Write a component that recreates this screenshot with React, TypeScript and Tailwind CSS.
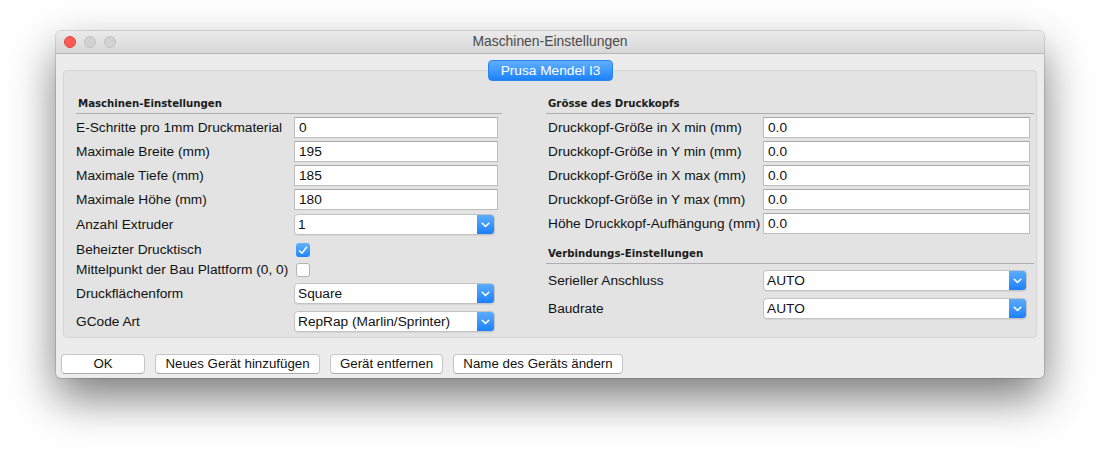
import React from "react";

const SANS = "font-['Liberation_Sans',Arial,sans-serif]";
const HEAD = "font-['DejaVu_Sans',Verdana,sans-serif]";

function Chevron() {
  return (
    <svg width="9" height="6" viewBox="0 0 9 6" fill="none">
      <path d="M1.2 1.2 L4.5 4.4 L7.8 1.2" stroke="white" strokeWidth="1.5" strokeLinecap="round" strokeLinejoin="round" />
    </svg>
  );
}

function TextBox({ value, w }: { value: string; w: string }) {
  return (
    <div
      className={`${w} h-[21px] bg-white border border-[#bdbdbd] border-t-[#a8a8a8] flex items-center pl-[4px] text-[13.7px] text-[#111] leading-none`}
    >
      {value}
    </div>
  );
}

function Select({ value, w }: { value: string; w: string }) {
  return (
    <div
      className={`${w} h-[21px] bg-white border border-[#c3c3c3] rounded-[4px] flex items-stretch shadow-[0_1px_0_rgba(0,0,0,0.06)] overflow-hidden`}
    >
      <div className="flex-1 flex items-center pl-[3px] text-[13.7px] text-[#111] leading-none">{value}</div>
      <div className="w-[17px] bg-gradient-to-b from-[#5aacfa] to-[#1a80fb] flex items-center justify-center">
        <Chevron />
      </div>
    </div>
  );
}

function Check({ on }: { on: boolean }) {
  return on ? (
    <div className="w-[14px] h-[14px] rounded-[3px] bg-gradient-to-b from-[#64b2fb] to-[#1d83fb] flex items-center justify-center">
      <svg width="10" height="9" viewBox="0 0 10 9" fill="none">
        <path d="M1.5 4.8 L3.9 7.3 L8.6 1.3" stroke="white" strokeWidth="1.5" strokeLinecap="round" strokeLinejoin="round" />
      </svg>
    </div>
  ) : (
    <div className="w-[14px] h-[14px] rounded-[3px] bg-white border border-[#b3b3b3]" />
  );
}

function Header({ text }: { text: string }) {
  return (
    <div className="h-[22px] border-b border-[#aeaeae] flex items-end pb-[4px] pl-[2px]">
      <span className={`${HEAD} font-bold text-[10.2px] leading-none text-[#1a1a1a]`}>{text}</span>
    </div>
  );
}

function Row({ label, children, lw, className = "" }: { label: string; children: React.ReactNode; lw: string; className?: string }) {
  return (
    <div className={`flex items-center ${className}`}>
      <div className={`${lw} text-[13.7px] text-[#111] leading-none whitespace-nowrap`}>{label}</div>
      {children}
    </div>
  );
}

function Btn({ label, w }: { label: string; w: string }) {
  return (
    <div
      className={`${w} h-[20px] bg-white border border-[#c6c6c6] border-b-[#acacac] rounded-[4px] flex items-center justify-center text-[13.3px] text-[#111] leading-none`}
    >
      {label}
    </div>
  );
}

export default function App() {
  return (
    <div className={`w-[1100px] h-[458px] bg-white pl-[56px] pt-[31px] ${SANS}`}>
      <div className="w-[988px] h-[347px] bg-[#ececec] rounded-[5px] shadow-[0_20px_45px_rgba(0,0,0,0.52),0_0_0_1px_rgba(0,0,0,0.13)] flex flex-col overflow-hidden">
        {/* title bar */}
        <div className="h-[23px] bg-gradient-to-b from-[#ebebeb] to-[#d7d7d7] border-b border-[#b6b6b6] flex items-center justify-center relative">
          <div className="absolute left-[8px] top-[5px] flex items-center gap-[8px]">
            <div className="w-[12px] h-[12px] rounded-full bg-[#fc5b57] border border-[#e2463f]" />
            <div className="w-[12px] h-[12px] rounded-full bg-[#d2d2d2] border border-[#c1c1c1]" />
            <div className="w-[12px] h-[12px] rounded-full bg-[#d2d2d2] border border-[#c1c1c1]" />
          </div>
          <div className="text-[13.9px] text-[#4a4a4a] leading-none">Maschinen-Einstellungen</div>
        </div>

        {/* content */}
        <div className="flex-1 flex flex-col px-[7px] pt-[6px]">
          <div className="flex justify-center relative z-10 pl-[1px]">
            <div className="w-[125px] h-[21px] rounded-[4px] bg-gradient-to-b from-[#5eaffa] to-[#1b80fb] border border-[#2a86ea] flex items-center justify-center text-white text-[13.7px] leading-none">
              Prusa Mendel I3
            </div>
          </div>
          <div className="-mt-[11px] h-[268px] bg-[#e3e3e3] border border-[#d4d4d4] rounded-[4px] flex pt-[21px] pl-[12px]">
            {/* left column */}
            <div className="w-[426px] flex flex-col">
              <Header text="Maschinen-Einstellungen" />
              <div className="flex flex-col gap-[3px] mt-[3px]">
                <Row label="E-Schritte pro 1mm Druckmaterial" lw="w-[218px]"><TextBox value="0" w="w-[204px]" /></Row>
                <Row label="Maximale Breite (mm)" lw="w-[218px]"><TextBox value="195" w="w-[204px]" /></Row>
                <Row label="Maximale Tiefe (mm)" lw="w-[218px]"><TextBox value="185" w="w-[204px]" /></Row>
                <Row label="Maximale Höhe (mm)" lw="w-[218px]"><TextBox value="180" w="w-[204px]" /></Row>
                <Row label="Anzahl Extruder" lw="w-[218px]" className="mt-[1px]"><Select value="1" w="w-[201px]" /></Row>
              </div>
              <div className="flex flex-col gap-[6px] mt-[8px]">
                <Row label="Beheizter Drucktisch" lw="w-[220px]"><Check on={true} /></Row>
                <Row label="Mittelpunkt der Bau Plattform (0, 0)" lw="w-[220px]"><Check on={false} /></Row>
              </div>
              <div className="flex flex-col gap-[7px] mt-[6px]">
                <Row label="Druckflächenform" lw="w-[218px]"><Select value="Square" w="w-[201px]" /></Row>
                <Row label="GCode Art" lw="w-[218px]"><Select value="RepRap (Marlin/Sprinter)" w="w-[201px]" /></Row>
              </div>
            </div>

            {/* right column */}
            <div className="w-[488px] ml-[44px] flex flex-col">
              <Header text="Grösse des Druckkopfs" />
              <div className="flex flex-col gap-[3px] mt-[3px]">
                <Row label="Druckkopf-Größe in X min (mm)" lw="w-[217px] pl-[2px]"><TextBox value="0.0" w="w-[267px]" /></Row>
                <Row label="Druckkopf-Größe in Y min (mm)" lw="w-[217px] pl-[2px]"><TextBox value="0.0" w="w-[267px]" /></Row>
                <Row label="Druckkopf-Größe in X max (mm)" lw="w-[217px] pl-[2px]"><TextBox value="0.0" w="w-[267px]" /></Row>
                <Row label="Druckkopf-Größe in Y max (mm)" lw="w-[217px] pl-[2px]"><TextBox value="0.0" w="w-[267px]" /></Row>
                <Row label="Höhe Druckkopf-Aufhängung (mm)" lw="w-[217px] pl-[2px]"><TextBox value="0.0" w="w-[267px]" /></Row>
              </div>
              <div className="mt-[8px]">
                <Header text="Verbindungs-Einstellungen" />
              </div>
              <div className="flex flex-col gap-[7px] mt-[6px]">
                <Row label="Serieller Anschluss" lw="w-[217px] pl-[2px]"><Select value="AUTO" w="w-[264px]" /></Row>
                <Row label="Baudrate" lw="w-[217px] pl-[2px]"><Select value="AUTO" w="w-[264px]" /></Row>
              </div>
            </div>
          </div>

          {/* buttons */}
          <div className="flex gap-[10px] mt-[16px] -ml-[2px]">
            <Btn label="OK" w="w-[84px]" />
            <Btn label="Neues Gerät hinzufügen" w="w-[165px]" />
            <Btn label="Gerät entfernen" w="w-[113px]" />
            <Btn label="Name des Geräts ändern" w="w-[170px]" />
          </div>
        </div>
      </div>
    </div>
  );
}
